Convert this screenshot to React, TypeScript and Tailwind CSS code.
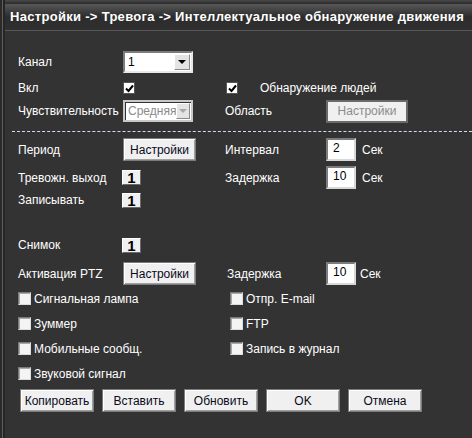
import type { ReactNode } from "react";

function Check() {
    return (
        <svg width="9" height="9" viewBox="0 0 9 9" className="block">
            <path d="M1 4.5 L3.5 7 L8 1.5" fill="none" stroke="#000" strokeWidth="2" />
        </svg>
    );
}

function CheckedBox() {
    return (
        <div className="w-[12px] h-[12px] bg-white border border-[#555] flex items-center justify-center">
            <Check />
        </div>
    );
}

function EmptyBox() {
    return (
        <div className="w-[13px] h-[13px] bg-[#f4f4f4] border border-t-[#7a7a7a] border-l-[#7a7a7a] border-r-[#dcdcdc] border-b-[#dcdcdc] shadow-[inset_1px_1px_0_#a8a8a8]" />
    );
}

function Btn({ children, w, disabled }: { children: ReactNode; w: string; disabled?: boolean }) {
    return (
        <div
            className={`${w} h-[23px] flex items-center justify-center text-[12px] bg-[#f0f0f0] ${
                disabled
                    ? "text-[#8c8c8c] border-2 border-[#6a6a6a]"
                    : "text-[#0a0a20] border border-[#7c7c7c] shadow-[inset_1px_1px_0_#ffffff,inset_-1px_-1px_0_#a0a0a0]"
            }`}
        >
            {children}
        </div>
    );
}

function NumBox() {
    return (
        <div className="w-[19px] h-[15px] bg-[#f0f0f0] border border-t-[#ffffff] border-l-[#ffffff] border-r-[#6a6a6a] border-b-[#6a6a6a] flex items-center justify-center text-[15px] font-bold leading-none text-black">
            1
        </div>
    );
}

function Field({ value }: { value: string }) {
    return (
        <div className="w-[30px] h-[23px] bg-white border-2 border-t-[#7c7c7c] border-l-[#7c7c7c] border-r-[#d8d8d8] border-b-[#d8d8d8] text-[12px] text-black pl-[5px] pt-[1px] leading-[14px]">
            {value}
        </div>
    );
}

function Select({ value, disabled }: { value: string; disabled?: boolean }) {
    return (
        <div
            className={`w-[70px] h-[22px] bg-white flex items-center border-2 ${
                disabled
                    ? "border-[#c8c8c8] shadow-[inset_1px_1px_0_#333]"
                    : "border-t-[#7c7c7c] border-l-[#7c7c7c] border-r-[#e8e8e8] border-b-[#e8e8e8]"
            }`}
        >
            <span className={`flex-1 pl-[3px] text-[12px] ${disabled ? "text-[#8a8a8a]" : "text-black"}`}>{value}</span>
            <div className="w-[16px] h-[16px] mr-[1px] bg-[#e4e4e4] border border-t-white border-l-white border-r-[#8a8a8a] border-b-[#8a8a8a] flex items-center justify-center">
                <svg width="8" height="4" viewBox="0 0 8 4">
                    <path d="M0 0 H8 L4 4 Z" fill={disabled ? "#a8a8a8" : "#000"} />
                </svg>
            </div>
        </div>
    );
}

function Row({ h, children, className = "" }: { h: string; children: ReactNode; className?: string }) {
    return <div className={`${h} flex items-center ${className}`}>{children}</div>;
}

function CheckItem({ label }: { label: string }) {
    return (
        <div className="flex items-center gap-[3px]">
            <EmptyBox />
            <span>{label}</span>
        </div>
    );
}

export default function App() {
    return (
        <div
            className="w-[472px] h-[438px] bg-[#333333] flex text-white text-[12px] overflow-hidden"
            style={{ fontFamily: '"Liberation Sans", Arial, sans-serif' }}
        >
            {/* left frame edge */}
            <div className="w-[2px] bg-[#2a2a2a]" />
            <div className="w-[1px] bg-[#5e5e5e]" />
            <div className="w-[2px] bg-[#262626]" />

            <div className="flex-1 flex flex-col min-w-0">
                {/* top strip + title bar */}
                <div className="h-[4px] bg-gradient-to-b from-[#4a4a4a] to-[#2a2a2a]" />
                <div className="h-[27px] bg-gradient-to-b from-[#585858] via-[#2c2c2c] to-[#303030] border-b border-[#575757] flex items-center pl-[5px]">
                    <span className="text-[13px] font-bold text-white whitespace-nowrap tracking-[0.3px]">
                        Настройки -&gt; Тревога -&gt; Интеллектуальное обнаружение движения
                    </span>
                </div>

                <div className="pl-[13px] pt-[20px]">
                    <Row h="h-[22px]">
                        <span className="w-[105px]">Канал</span>
                        <Select value="1" />
                    </Row>
                    <Row h="h-[22px]" className="mt-[4px]">
                        <span className="w-[105px]">Вкл</span>
                        <div className="w-[103px]">
                            <CheckedBox />
                        </div>
                        <div className="w-[34px]">
                            <CheckedBox />
                        </div>
                        <span>Обнаружение людей</span>
                    </Row>
                    <Row h="h-[22px]" className="mt-[1px]">
                        <span className="w-[105px]">Чувствительность</span>
                        <div className="w-[102px]">
                            <Select value="Средняя" disabled />
                        </div>
                        <span className="w-[101px]">Область</span>
                        <Btn w="w-[82px]" disabled>
                            Настройки
                        </Btn>
                    </Row>
                </div>

                <div className="ml-[7px] mt-[9px] border-t border-dashed border-[#cfdcf0]" />

                <div className="pl-[13px] pt-[6px]">
                    <Row h="h-[23px]">
                        <span className="w-[105px]">Период</span>
                        <div className="w-[102px]">
                            <Btn w="w-[73px]">Настройки</Btn>
                        </div>
                        <span className="w-[101px]">Интервал</span>
                        <Field value="2" />
                        <span className="ml-[6px]">Сек</span>
                    </Row>
                    <Row h="h-[23px]" className="mt-[5px]">
                        <span className="w-[104px]">Тревожн. выход</span>
                        <div className="w-[103px]">
                            <NumBox />
                        </div>
                        <span className="w-[101px]">Задержка</span>
                        <Field value="10" />
                        <span className="ml-[6px]">Сек</span>
                    </Row>
                    <Row h="h-[22px]">
                        <span className="w-[104px]">Записывать</span>
                        <NumBox />
                    </Row>
                    <Row h="h-[22px]" className="mt-[23px]">
                        <span className="w-[104px]">Снимок</span>
                        <NumBox />
                    </Row>
                    <Row h="h-[23px]" className="mt-[6px]">
                        <span className="w-[105px]">Активация PTZ</span>
                        <div className="w-[104px]">
                            <Btn w="w-[73px]">Настройки</Btn>
                        </div>
                        <span className="w-[99px]">Задержка</span>
                        <Field value="10" />
                        <span className="ml-[4px]">Сек</span>
                    </Row>
                </div>

                <div className="pl-[13px] grid grid-cols-[212px_1fr] auto-rows-[25px] items-center mt-[1px]">
                    <CheckItem label="Сигнальная лампа" />
                    <CheckItem label="Отпр. E-mail" />
                    <CheckItem label="Зуммер" />
                    <CheckItem label="FTP" />
                    <CheckItem label="Мобильные сообщ." />
                    <CheckItem label="Запись в журнал" />
                    <CheckItem label="Звуковой сигнал" />
                </div>

                <div className="pl-[15px] mt-[3px] flex gap-[8px]">
                    <Btn w="w-[74px]">Копировать</Btn>
                    <Btn w="w-[74px]">Вставить</Btn>
                    <Btn w="w-[74px]">Обновить</Btn>
                    <Btn w="w-[74px]">OK</Btn>
                    <Btn w="w-[74px]">Отмена</Btn>
                </div>
            </div>
        </div>
    );
}
